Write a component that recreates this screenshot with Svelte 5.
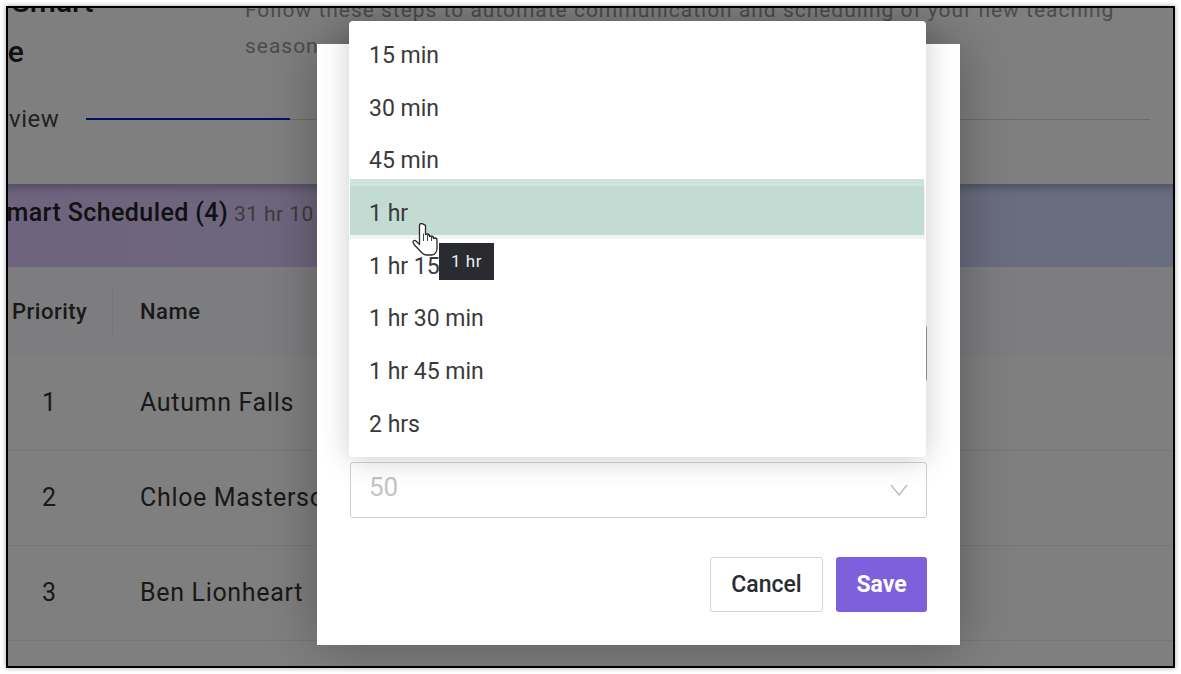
<script lang="ts">
	const options = ["15 min", "30 min", "45 min", "1 hr", "1 hr 15 min", "1 hr 30 min", "1 hr 45 min", "2 hrs"];
	const hovered = "1 hr";
	const students = [
		{ priority: 1, name: "Autumn Falls" },
		{ priority: 2, name: "Chloe Masterson" },
		{ priority: 3, name: "Ben Lionheart" },
		{ priority: 4, name: "" }
	];
</script>

<div class="shot">
	<div class="frame">
		<div class="content">
			<header class="intro">
				<h1>Teacher Smart Schedule</h1>
				<p>Follow these steps to automate communication and scheduling of your new teaching season</p>
			</header>
			<nav class="tabs">
				<span class="tab">Overview</span>
				<span class="active-line"></span>
				<span class="rest-line"></span>
			</nav>
			<section class="band">
				<strong>Smart Scheduled (4)</strong>
				<span>31 hr 10 min</span>
			</section>
			<div class="thead">
				<div class="priority-head"><span>Priority</span></div>
				<div class="name-head">Name</div>
			</div>
			{#each students as s}
				<div class="row">
					<div class="num">{s.priority}</div>
					<div class="name">{s.name}</div>
				</div>
			{/each}
		</div>

		<div class="overlay"></div>

		<div class="modal">
			<div class="select"></div>
			<div class="select disabled">
				<span>50</span>
				<svg width="18" height="12" viewBox="0 0 18 12"><path d="M1 1l8 10 8-10" fill="none" stroke="#bdbdbd" stroke-width="1.4" /></svg>
			</div>
			<div class="footer">
				<button class="cancel">Cancel</button>
				<button class="save">Save</button>
			</div>

			<ul class="dropdown">
				{#each options as o}
					<li class:hover={o === hovered}><span>{o}</span></li>
				{/each}
			</ul>
			<div class="tooltip">{hovered}</div>
			<svg class="hand" width="26" height="33" viewBox="0 0 26 33">
				<path d="M7.5 21.5 4 18c-1.300-1.200-3.200-.4-3 1.200.2 1 .8 1.800 1.500 2.800l7 7.500c1.500 1.500 3 2.500 5 2.500h5c3 0 5.500-3 5.500-6.500v-8c0-1.300-.6-2.500-2-2.500-1 0-1.500.5-1.500.5 0-1.500-1-2.500-2.300-2.500-1 0-1.700.5-1.700.5 0-1.500-1-2.500-2.300-2.500-.8 0-1.200.3-1.700.6V2.500C11.500 1.200 10.700.5 9.500.5s-2 .7-2 2z" fill="#fff" stroke="#2a2a2a" stroke-width="1.300" stroke-linejoin="round" />
				<path d="M11.500 10.500V18M15.500 11v7M19.500 13v5" fill="none" stroke="#444" stroke-width="1" />
			</svg>
		</div>
	</div>
</div>

<style>
	:global(body) {
		background: #fff;
	}

	.shot {
		width: 1181px;
		height: 674px;
		padding: 6px;
		box-sizing: border-box;
		font-family: Roboto, "Liberation Sans", sans-serif;
		overflow: hidden;
	}

	.frame {
		position: relative;
		width: 1169px;
		height: 662px;
		box-sizing: border-box;
		border: 2px solid #000;
		box-shadow: 0 0 5px rgba(0, 0, 0, 0.35);
		overflow: hidden;
		background: #fff;
	}

	.content {
		margin: -31px 0 0 -120px;
	}

	.intro {
		display: grid;
		grid-template-columns: 357px 1fr;
	}

	h1 {
		margin: 0;
		padding-left: 12px;
		width: 240px;
		font-size: 30px;
		font-weight: 500;
		line-height: 50px;
		word-spacing: -4px;
		color: #222;
	}

	.intro p {
		margin: 0;
		padding: 15px 40px 0 0;
		font-size: 21px;
		line-height: 36px;
		letter-spacing: 0.98px;
		color: #999;
	}

	.tabs {
		display: flex;
		align-items: center;
		height: 36px;
		margin-top: 24px;
		margin-bottom: 47px;
		padding-left: 70px;
		padding-right: 23px;
	}

	.tab {
		font-size: 24px;
		letter-spacing: 0.5px;
		color: #444;
		margin-right: 27px;
	}

	.active-line {
		width: 204px;
		height: 2px;
		background: #0020dc;
	}

	.rest-line {
		flex: 1;
		height: 1px;
		margin-top: 1px;
		background: #d8d8d8;
	}

	.band {
		height: 83px;
		box-sizing: border-box;
		padding: 14px 0 0 103px;
		background: linear-gradient(90deg, #dfc6ff 0%, #dccdfb 40%, #d3dcff 100%);
		box-shadow: inset 0 8px 8px -4px rgba(0, 0, 0, 0.25);
	}

	.band strong {
		font-size: 25px;
		font-weight: 500;
		letter-spacing: 0.4px;
		color: #222;
	}

	.band span {
		margin-left: 2px;
		font-size: 21px;
		letter-spacing: 0.4px;
		color: #777;
	}

	.thead {
		display: flex;
		align-items: center;
		height: 89px;
		background: #fafbfe;
		font-size: 22px;
		font-weight: 500;
		letter-spacing: 0.5px;
		color: #333;
	}

	.priority-head {
		width: 225px;
		box-sizing: border-box;
		height: 47px;
		line-height: 47px;
		padding-left: 124px;
		border-right: 1px solid #eee;
	}

	.name-head {
		padding-left: 27px;
	}

	.row {
		display: flex;
		align-items: center;
		height: 95px;
		box-sizing: border-box;
		padding-bottom: 1px;
		border-bottom: 1px solid #eee;
		font-size: 25px;
		letter-spacing: 0.67px;
		color: #333;
	}

	.num {
		width: 252px;
		box-sizing: border-box;
		padding-left: 154px;
	}

	.overlay {
		position: absolute;
		inset: 0;
		background: rgba(0, 0, 0, 0.5);
	}

	.modal {
		position: absolute;
		left: 309px;
		top: 36px;
		width: 643px;
		height: 601px;
		box-sizing: border-box;
		padding: 0 33px 33px;
		display: flex;
		flex-direction: column;
		justify-content: flex-end;
		background: #fff;
		box-shadow: 0 0 50px rgba(0, 0, 0, 0.3);
	}

	.select {
		height: 57px;
		box-sizing: border-box;
		border: 1px solid #999;
		border-radius: 3px;
		margin-bottom: 80px;
	}

	.select.disabled {
		display: flex;
		align-items: center;
		justify-content: space-between;
		height: 56px;
		margin-bottom: 39px;
		padding: 0 18px 7px;
		border-color: #d0d0d0;
		font-size: 26px;
		color: #c4c4c4;
	}

	.select.disabled svg {
		margin-top: 7px;
	}

	.footer {
		display: flex;
		justify-content: flex-end;
		gap: 13px;
	}

	button {
		height: 55px;
		border-radius: 3px;
		font-family: inherit;
		font-size: 23px;
		font-weight: 500;
	}

	.cancel {
		width: 113px;
		background: #fff;
		border: 1px solid #d4d4d4;
		color: #2a2c33;
	}

	.save {
		width: 91px;
		background: #7f60dc;
		border: none;
		color: #fff;
		font-weight: 700;
	}

	.dropdown {
		position: absolute;
		left: 32px;
		top: -23px;
		width: 577px;
		height: 436px;
		box-sizing: border-box;
		margin: 0;
		padding: 7px 0;
		list-style: none;
		background: #fff;
		border-radius: 4px;
		box-shadow: 0 2px 30px rgba(0, 0, 0, 0.2);
	}

	li {
		position: relative;
		height: 52.700px;
		line-height: 55px;
		padding-left: 20px;
		font-size: 23px;
		color: #3a3a3a;
	}

	li span {
		position: relative;
	}

	li.hover {
		background: linear-gradient(90deg, #f0f4f2, #f0f4f2) 1px 0 / 575px 100% no-repeat;
	}

	li.hover::before {
		content: "";
		position: absolute;
		left: 1px;
		width: 574px;
		top: -7px;
		height: 56px;
		background: linear-gradient(#cfe3dd 0, #cfe3dd 7px, #c2dbd3 7px);
	}

	.tooltip {
		position: absolute;
		left: 122px;
		top: 199px;
		width: 55px;
		height: 37px;
		line-height: 37px;
		text-align: center;
		background: #2a2b30;
		color: #eee;
		font-size: 17px;
		letter-spacing: 0.5px;
	}

	.hand {
		position: absolute;
		left: 95px;
		top: 179px;
	}
</style>
